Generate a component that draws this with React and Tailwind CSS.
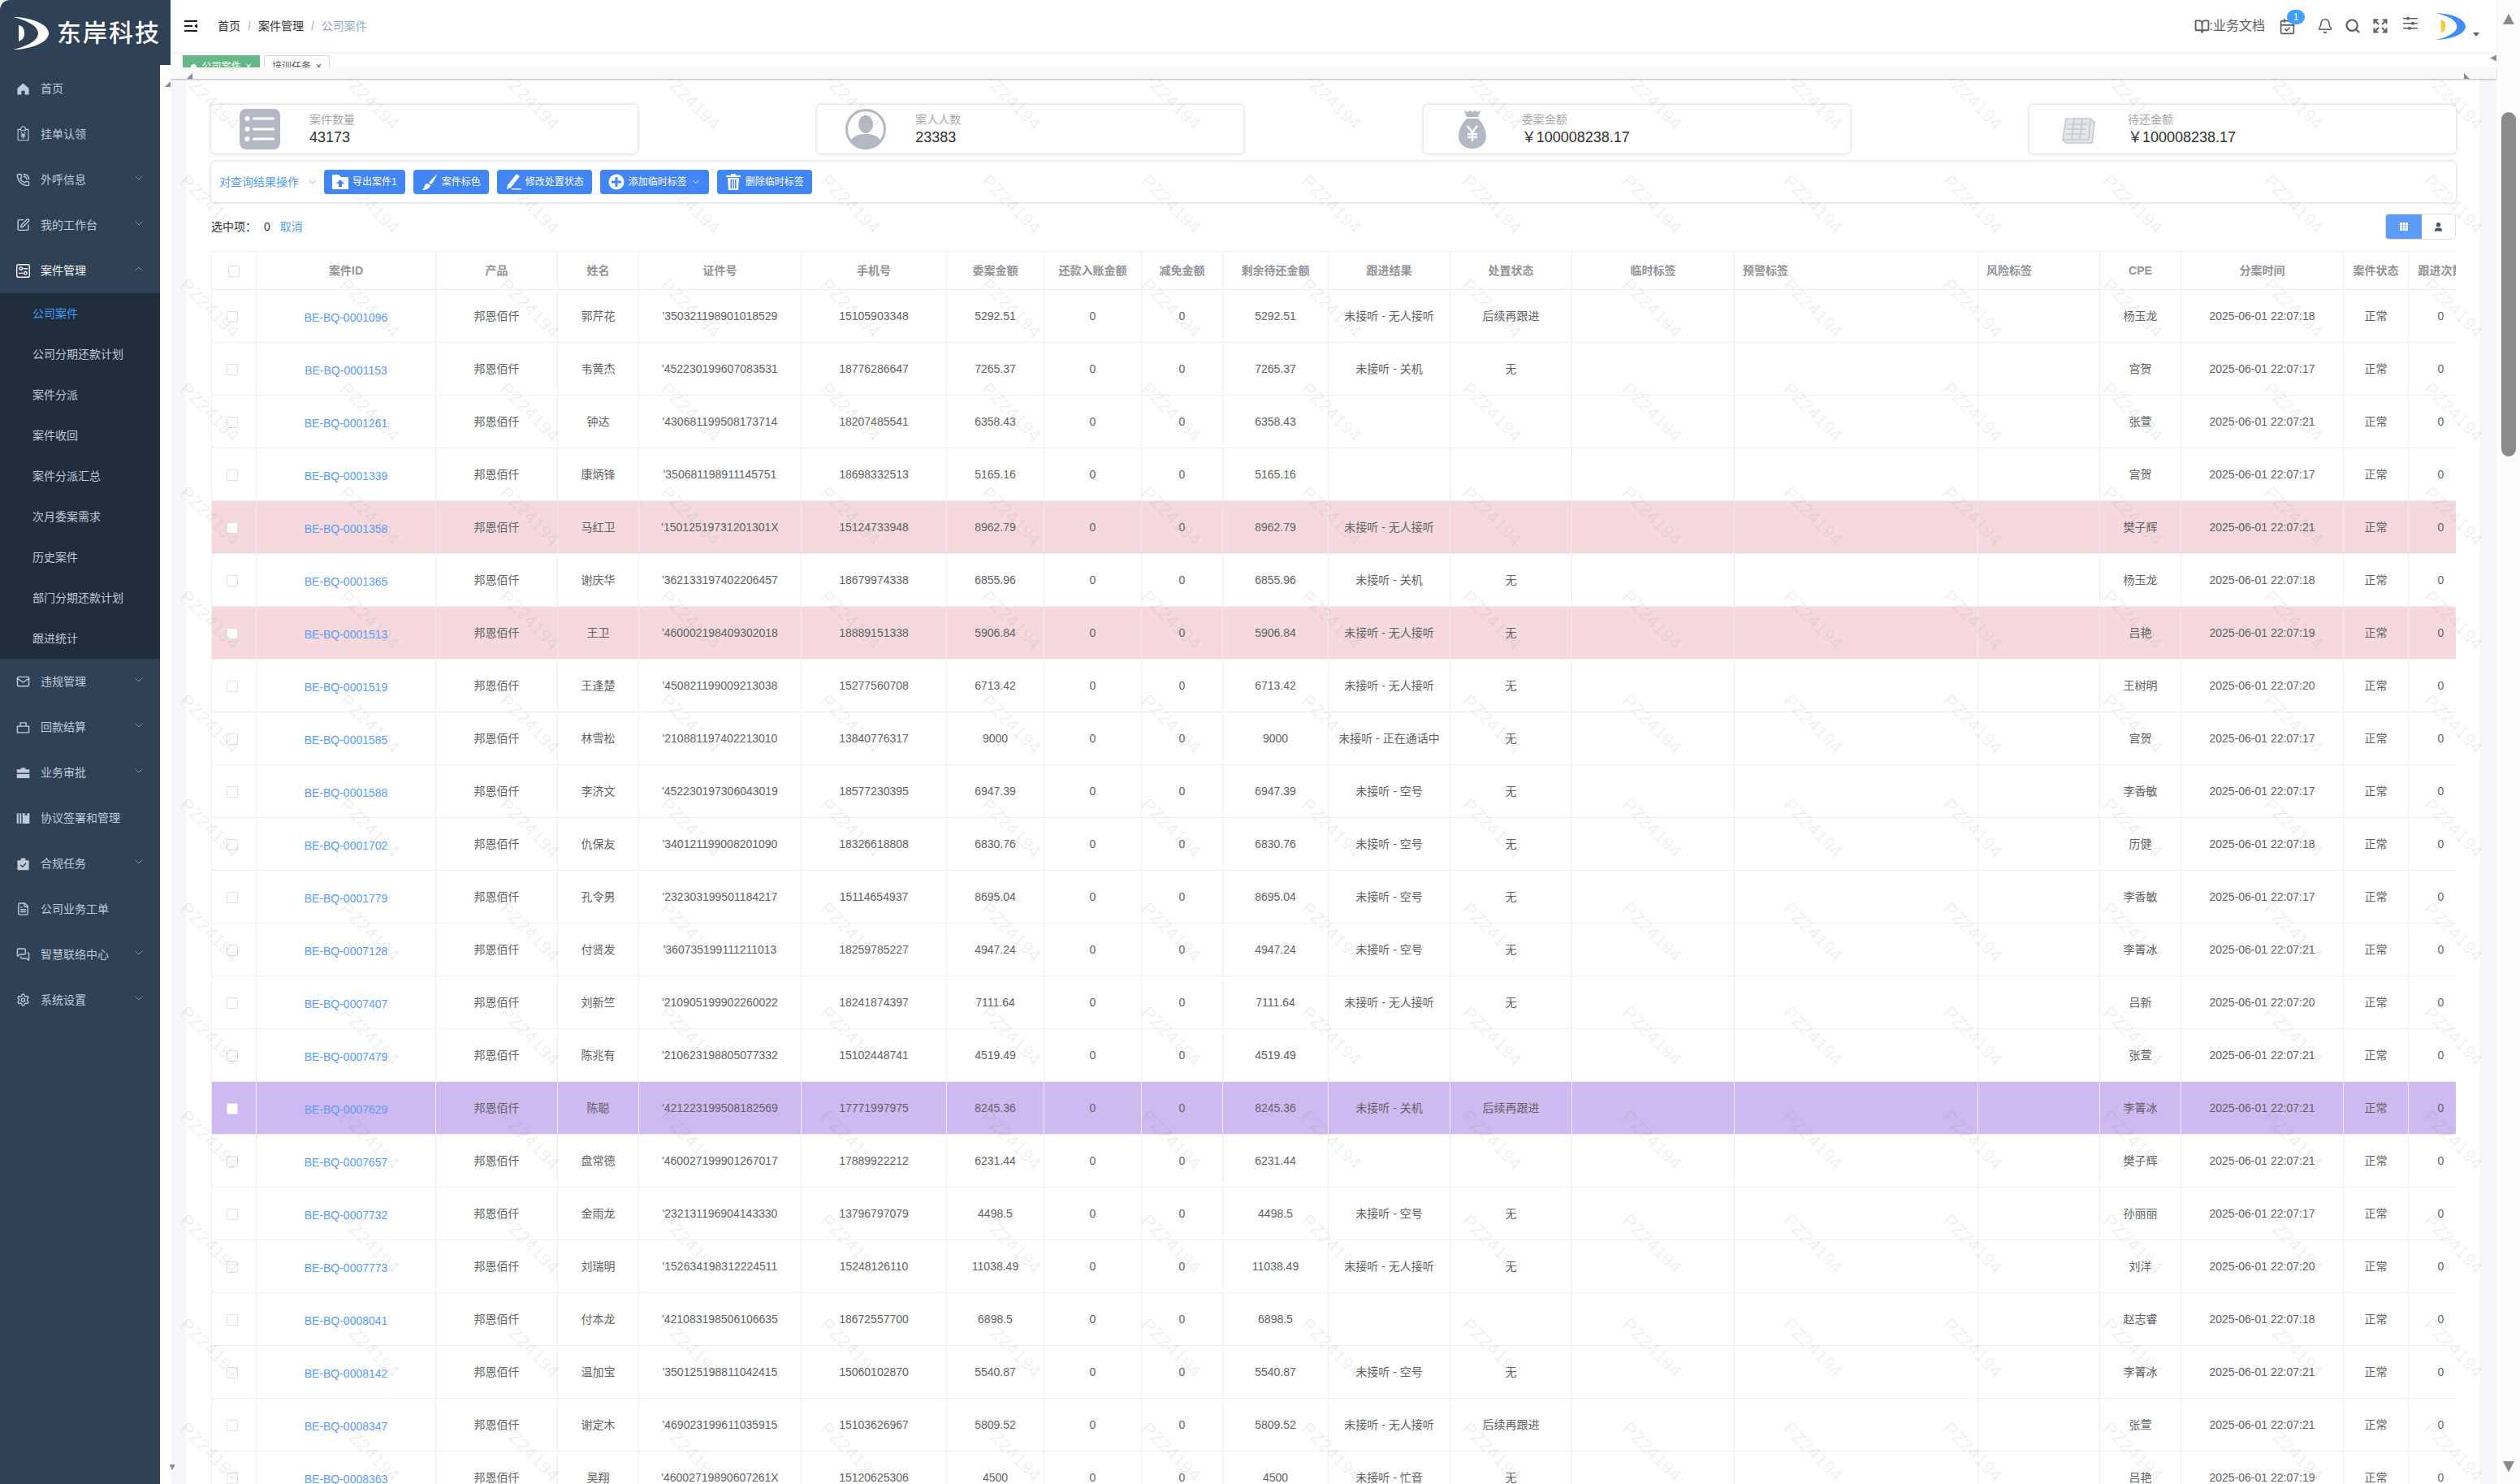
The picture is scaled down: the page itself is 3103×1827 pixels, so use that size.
import React from 'react';
import {
  BookOpen, Bell, Search, Expand, CalendarCheck, ChevronDown, ChevronUp, PhoneCall, SquarePen,
  Mail, FileText, Settings, MessagesSquare, User,
} from 'lucide-react';

// Icons the packages don't have in the right shape
const HomeIcon = () => (
  <svg viewBox="0 0 24 24" className="w-[17px] h-[17px]" fill="#bfcbd9"><path d="M12 2 2 11v11h7v-7h6v7h7V11z" /></svg>
);
const ClipYenIcon = () => (
  <svg viewBox="0 0 24 24" className="w-[17px] h-[20px]" fill="none" stroke="#bfcbd9" strokeWidth="1.6">
    <path d="M8 4H3v19h18V4h-5M8 6V3a4 4 0 0 1 8 0v3z" />
    <path d="m8 9 4 5 4-5M12 14v6M8 14h8M8 17h8" />
  </svg>
);
const CaseIcon = () => (
  <svg viewBox="0 0 24 24" className="w-[17px] h-[17px]" fill="none" stroke="#f4f4f5" strokeWidth="2">
    <rect x="1" y="1" width="22" height="22" rx="3" />
    <circle cx="8" cy="8" r="2.5" /><circle cx="16" cy="16" r="2.5" />
    <path d="M12 8h8M4 16h8" />
  </svg>
);
const BagIcon = () => (
  <svg viewBox="0 0 24 24" className="w-[17px] h-[17px]" fill="none" stroke="#bfcbd9" strokeWidth="2">
    <path d="M2 10h20v11H2zM7 10V4h10v6" />
  </svg>
);
const CaseBagIcon = () => (
  <svg viewBox="0 0 24 24" className="w-[17px] h-[17px]" fill="#bfcbd9">
    <path d="M8 6V3h8v3h7v6H1V6zM1 14h22v7H1z" />
  </svg>
);
const BookFillIcon = () => (
  <svg viewBox="0 0 24 24" className="w-[17px] h-[17px]" fill="#bfcbd9">
    <path d="M1 3h3v18H1zM6 3h3v18H6zM11 3h4v5l2-2 2 2V3h4v18H11z" />
  </svg>
);
const ClipCheckIcon = () => (
  <svg viewBox="0 0 24 24" className="w-[17px] h-[17px]" fill="#bfcbd9">
    <path d="M2 6h6V2h8v4h6v17H2z" />
    <path d="m7 14 4 3 6-6" fill="none" stroke="#304156" strokeWidth="1.8" />
  </svg>
);

const LogoMark = ({ crescent, block, className }) => (
  <svg viewBox="0 0 44 40" className={className}>
    <path d="M0 0C20 0 44 8 44 20S20 40 0 40C14 37 31 30 31 20S14 3 0 0Z" fill={crescent} />
    <path d="M7 10c5 1 7 5 7 10s-2 8-7 10z" fill={block} />
  </svg>
);

const Tri = ({ points, className }) => (
  <svg viewBox="0 0 20 20" className={className} fill="#8b8b8b"><polygon points={points} /></svg>
);

const menuTop = [
  { icon: <HomeIcon />, label: '首页' },
  { icon: <ClipYenIcon />, label: '挂单认领' },
  { icon: <PhoneCall size={17} color="#bfcbd9" />, label: '外呼信息', arrow: true },
  { icon: <SquarePen size={18} color="#bfcbd9" />, label: '我的工作台', arrow: true },
];
const subMenu = ['公司案件', '公司分期还款计划', '案件分派', '案件收回', '案件分派汇总', '次月委案需求', '历史案件', '部门分期还款计划', '跟进统计'];
const menuBottom = [
  { icon: <Mail size={18} color="#bfcbd9" />, label: '违规管理', arrow: true },
  { icon: <BagIcon />, label: '回款结算', arrow: true },
  { icon: <CaseBagIcon />, label: '业务审批', arrow: true },
  { icon: <BookFillIcon />, label: '协议签署和管理' },
  { icon: <ClipCheckIcon />, label: '合规任务', arrow: true },
  { icon: <FileText size={18} color="#bfcbd9" />, label: '公司业务工单' },
  { icon: <MessagesSquare size={18} color="#bfcbd9" />, label: '智慧联络中心', arrow: true },
  { icon: <Settings size={18} color="#bfcbd9" />, label: '系统设置', arrow: true },
];

const MenuItem = ({ item }) => (
  <div className="flex h-[56px] items-center pl-[20px] pr-[31px] text-[14px] text-[#bfcbd9]">
    <span className="flex w-[17px] justify-center">{item.icon}</span>
    <span className="ml-[13px]">{item.label}</span>
    {item.arrow && <ChevronDown size={16} strokeWidth={1.4} color="#909399" className="ml-auto mb-[4px]" />}
  </div>
);

const Sidebar = () => (
  <aside className="w-[210px] shrink-0 bg-[#304156] rounded-tl-[12px]">
    <div className="flex h-[81px] items-center pl-[16px]">
      <LogoMark crescent="#ffffff" block="#ffffff" className="w-[44px] h-[40px]" />
      <span className="ml-[10px] text-[30px] leading-none tracking-[2px] font-medium text-white">东岸科技</span>
    </div>
    {menuTop.map((m) => <MenuItem key={m.label} item={m} />)}
    <div className="flex h-[56px] items-center pl-[20px] pr-[31px] text-[14px] text-[#f4f4f5]">
      <span className="flex w-[17px] justify-center"><CaseIcon /></span>
      <span className="ml-[13px]">案件管理</span>
      <ChevronUp size={16} strokeWidth={1.4} color="#909399" className="ml-auto mb-[4px]" />
    </div>
    <div className="bg-[#1f2d3d]">
      {subMenu.map((s, i) => (
        <div key={s} className={`flex h-[50px] items-center pl-[40px] text-[14px] ${i === 0 ? 'text-[#409eff]' : 'text-[#bfcbd9]'}`}>{s}</div>
      ))}
    </div>
    {menuBottom.map((m) => <MenuItem key={m.label} item={m} />)}
  </aside>
);

const Header = () => (
  <header className="relative z-10 flex h-[64px] shrink-0 items-center bg-white pl-[17px] shadow-[0_1px_4px_rgba(0,21,41,0.08)]">
    <svg viewBox="0 0 16 14" className="w-[16px] h-[14px]" fill="#1f1f1f">
      <path d="M0 0h16v2H0zM0 6h10v2H0zM0 12h16v2H0zM16 4v6l-4-3z" />
    </svg>
    <nav className="ml-[25px] flex items-center text-[14px] text-[#303133]">
      <span>首页</span>
      <span className="mx-[9px] font-bold text-[#c0c4cc]">/</span>
      <span>案件管理</span>
      <span className="mx-[9px] font-bold text-[#c0c4cc]">/</span>
      <span className="text-[#97a8be]">公司案件</span>
    </nav>
    <div className="ml-auto flex items-center pr-[21px] text-[#5a5e66]">
      <BookOpen size={19} strokeWidth={2.4} />
      <span className="text-[16px]">:业务文档</span>
      <span className="relative ml-[17px] flex">
        <CalendarCheck size={21} strokeWidth={2} />
        <span className="absolute -top-[10px] left-[10px] flex h-[18px] w-[22px] items-center justify-center rounded-full bg-[#409eff] text-[12px] text-white">1</span>
      </span>
      <Bell size={20} strokeWidth={1.8} className="ml-[26px]" />
      <Search size={20} strokeWidth={2.6} className="ml-[14px]" />
      <Expand size={20} strokeWidth={2.4} className="ml-[14px]" />
      <svg viewBox="0 0 18 18" className="ml-[18px] mb-[6px] w-[18px] h-[18px]" fill="#5a5e66">
        <path d="M0 2h18v1.4H0zM0 8h18v1.4H0zM0 14h18v1.4H0z" />
        <circle cx="6" cy="2.7" r="2" /><circle cx="12" cy="8.7" r="2" /><circle cx="8" cy="14.7" r="2" />
      </svg>
      <LogoMark crescent="#3f8cf4" block="#f6c945" className="ml-[23px] w-[36px] h-[39px]" />
      <span className="ml-[9px] mt-[20px] h-0 w-0 border-x-[4px] border-t-[5px] border-x-transparent border-t-[#5a5e66]" />
    </div>
  </header>
);

const Tabs = () => (
  <div className="flex h-[19px] shrink-0 justify-between overflow-hidden bg-white pl-[15px]">
    <div className="flex gap-[5px] pt-[4px]">
      <div className="flex h-[28px] w-[95px] items-center justify-center gap-[6px] bg-[#67b886] text-[12px] text-white">
        <span className="h-[7px] w-[7px] rounded-full bg-white" />公司案件<span>×</span>
      </div>
      <div className="flex h-[28px] w-[81px] items-center justify-center gap-[6px] border border-[#d8dce5] text-[12px] text-[#495060]">
        培训任务<span>×</span>
      </div>
    </div>
    <Tri points="20,0 20,20 0,10" className="w-[8px] h-[15px]" />
  </div>
);

const ListIcon = () => (
  <svg viewBox="0 0 50 50" className="w-[50px] h-[50px]">
    <rect width="50" height="50" rx="8" fill="#b3b9c4" />
    {[12, 25, 37].map((y) => (
      <g key={y} fill="#ffffff">
        <circle cx="9.5" cy={y} r="3" />
        <rect x="16" y={y - 1.5} width="27" height="3" rx="1.5" />
      </g>
    ))}
  </svg>
);
const PersonIcon = () => (
  <svg viewBox="0 0 50 50" className="w-[50px] h-[50px]">
    <circle cx="25" cy="25" r="23.5" fill="#ffffff" stroke="#b3b9c4" strokeWidth="3" />
    <ellipse cx="25" cy="19" rx="9" ry="11" fill="#b3b9c4" />
    <path d="M6 40c4-7 10-9 19-9s15 2 19 9a23 23 0 0 1-38 0z" fill="#b3b9c4" />
  </svg>
);
const MoneyBagIcon = () => (
  <svg viewBox="0 0 50 50" className="w-[50px] h-[50px]">
    <path d="M15 2l4 2 3-2 3 2 3-2 3 2 4-2-3 8H18zM18 12h14c7 7 10 15 10 22 0 9-8 15-17 15S8 43 8 34c0-7 3-15 10-22z" fill="#b3b9c4" />
    <path d="m19 21 6 8 6-8M25 29v11M19 31h12M19 35h12" fill="none" stroke="#ffffff" strokeWidth="2.4" />
  </svg>
);
const BillsIcon = () => (
  <svg viewBox="0 0 50 50" className="w-[50px] h-[50px]" fill="none" stroke="#c3c8d0" strokeWidth="1.6">
    <path d="M10 12h30l-2 26H6zM40 12l5 4-3 26H10l-4-4" fill="#e4e6ea" />
    <path d="M12 19h24M11 25h24M10 31h24M20 13l-3 24M30 13l-3 24" />
  </svg>
);

const stats = [
  { icon: <ListIcon />, label: '案件数量', value: '43173' },
  { icon: <PersonIcon />, label: '案人人数', value: '23383' },
  { icon: <MoneyBagIcon />, label: '委案金额', value: '￥100008238.17' },
  { icon: <BillsIcon />, label: '待还金额', value: '￥100008238.17' },
];

const StatCard = ({ stat }) => (
  <div className="flex h-[60px] w-[525px] items-center rounded-[5px] bg-white pl-[35px] shadow-[0_0_4px_rgba(0,0,0,0.22)]">
    {stat.icon}
    <div className="ml-[36px]">
      <div className="text-[14px] leading-[20px] text-[#a8a8a8]">{stat.label}</div>
      <div className="text-[18px] leading-[24px] text-[#303133]">{stat.value}</div>
    </div>
  </div>
);

const FolderIcon = () => (
  <svg viewBox="0 0 20 20" className="w-[20px] h-[20px]" fill="#ffffff">
    <path d="M0 1h8l3 3h9v15H0z" /><path d="M10 7l5 5h-3v4H8v-4H5z" fill="#4285f4" />
  </svg>
);
const BrushIcon = () => (
  <svg viewBox="0 0 20 20" className="w-[20px] h-[20px]" fill="#ffffff">
    <path d="M19 0c-3 4-7 7-10 11l3 2c3-4 6-8 7-13zM8 12c-4 0-4 3-5 5l-2 3c4 0 9-2 10-6z" />
  </svg>
);
const PenIcon = () => (
  <svg viewBox="0 0 20 20" className="w-[20px] h-[20px]" fill="#ffffff">
    <path d="M14 0l4 3L7 17l-5 2 1-5zM8 18h12v1.6H8z" />
  </svg>
);
const PlusCircleIcon = () => (
  <svg viewBox="0 0 20 20" className="w-[20px] h-[20px]">
    <circle cx="10" cy="10" r="9.5" fill="#ffffff" />
    <path d="M8.5 4h3v4.500H16v3h-4.500V16h-3v-4.500H4v-3h4.500z" fill="#4285f4" />
  </svg>
);
const TrashIcon = () => (
  <svg viewBox="0 0 20 20" className="w-[20px] h-[20px]" fill="#ffffff">
    <path d="M7 0h6v2h6v2H1V2h6zM3 5h14l-1 15H4zM6.500 7v11h1.500V7zM9.300 7v11h1.500V7zM12 7v11h1.500V7z" fillRule="evenodd" />
  </svg>
);

const buttons = [
  { icon: <FolderIcon />, label: '导出案件1' },
  { icon: <BrushIcon />, label: '案件标色' },
  { icon: <PenIcon />, label: '修改处置状态' },
  { icon: <PlusCircleIcon />, label: '添加临时标签', arrow: true },
  { icon: <TrashIcon />, label: '删除临时标签' },
];

const Toolbar = () => (
  <div className="mt-[10px] flex h-[50px] items-center rounded-[5px] bg-white pl-[10px] shadow-[0_0_4px_rgba(0,0,0,0.22)]">
    <span className="text-[14px] text-[#5a9cf8]">对查询结果操作</span>
    <ChevronDown size={14} strokeWidth={1.4} color="#5a9cf8" className="ml-[10px]" />
    <div className="ml-[7px] flex gap-[10px]">
      {buttons.map((b) => (
        <button key={b.label} className="flex h-[30px] items-center gap-[5px] rounded-[4px] bg-[#4285f4] px-[10px] text-[12px] text-white">
          {b.icon}
          {b.label}
          {b.arrow && <ChevronDown size={12} />}
        </button>
      ))}
    </div>
  </div>
);

const colWidths = ['w-[55px]', 'w-[221px]', 'w-[150px]', 'w-[100px]', 'w-[200px]', 'w-[179px]', 'w-[120px]', 'w-[120px]', 'w-[100px]', 'w-[130px]', 'w-[150px]', 'w-[150px]', 'w-[200px]', 'w-[300px]', 'w-[150px]', 'w-[100px]', 'w-[200px]', 'w-[80px]', 'w-[80px]'];
const headers = ['案件ID', '产品', '姓名', '证件号', '手机号', '委案金额', '还款入账金额', '减免金额', '剩余待还金额', '跟进结果', '处置状态', '临时标签', '预警标签', '风险标签', 'CPE', '分案时间', '案件状态', '跟进次数'];
// estas dos cabeceras van a la izquierda en la tabla original
const leftHeaders = ['预警标签', '风险标签'];

const WU = '未接听 - 无人接听';
const GJ = '未接听 - 关机';
const KH = '未接听 - 空号';
const HX = '后续再跟进';

// id, 姓名, 证件号, 手机号, 金额, 跟进结果, 处置状态, CPE, 分案秒数, 行颜色
const rows = [
  ['0001096', '郭芹花', "'350321198901018529", '15105903348', '5292.51', WU, HX, '杨玉龙', '18'],
  ['0001153', '韦黄杰', "'452230199607083531", '18776286647', '7265.37', GJ, '无', '宫贺', '17'],
  ['0001261', '钟达', "'430681199508173714", '18207485541', '6358.43', '', '', '张萱', '21'],
  ['0001339', '康炳锋', "'350681198911145751", '18698332513', '5165.16', '', '', '宫贺', '17'],
  ['0001358', '马红卫', "'15012519731201301X", '15124733948', '8962.79', WU, '', '樊子辉', '21', 'pink'],
  ['0001365', '谢庆华', "'362133197402206457", '18679974338', '6855.96', GJ, '无', '杨玉龙', '18'],
  ['0001513', '王卫', "'460002198409302018", '18889151338', '5906.84', WU, '无', '吕艳', '19', 'pink'],
  ['0001519', '王逢楚', "'450821199009213038", '15277560708', '6713.42', WU, '无', '王树明', '20'],
  ['0001585', '林雪松', "'210881197402213010", '13840776317', '9000', '未接听 - 正在通话中', '无', '宫贺', '17'],
  ['0001588', '李济文', "'452230197306043019", '18577230395', '6947.39', KH, '无', '李香敏', '17'],
  ['0001702', '仇保友', "'340121199008201090", '18326618808', '6830.76', KH, '无', '历健', '18'],
  ['0001779', '孔令男', "'232303199501184217", '15114654937', '8695.04', KH, '无', '李香敏', '17'],
  ['0007128', '付贤发', "'360735199111211013", '18259785227', '4947.24', KH, '无', '李箐冰', '21'],
  ['0007407', '刘新竺', "'210905199902260022", '18241874397', '7111.64', WU, '无', '吕新', '20'],
  ['0007479', '陈兆有', "'210623198805077332", '15102448741', '4519.49', '', '', '张萱', '21'],
  ['0007629', '陈聪', "'421223199508182569", '17771997975', '8245.36', GJ, HX, '李箐冰', '21', 'purple'],
  ['0007657', '盘常德', "'460027199901267017", '17889922212', '6231.44', '', '', '樊子辉', '21'],
  ['0007732', '金雨龙', "'232131196904143330", '13796797079', '4498.5', KH, '无', '孙丽丽', '17'],
  ['0007773', '刘瑞明', "'152634198312224511", '15248126110', '11038.49', WU, '无', '刘洋', '20'],
  ['0008041', '付本龙', "'421083198506106635", '18672557700', '6898.5', '', '', '赵志睿', '18'],
  ['0008142', '温加宝', "'350125198811042415", '15060102870', '5540.87', KH, '无', '李箐冰', '21'],
  ['0008347', '谢定木', "'469023199611035915", '15103626967', '5809.52', WU, HX, '张萱', '21'],
  ['0008363', '吴翔', "'46002719890607261X", '15120625306', '4500', '未接听 - 忙音', '无', '吕艳', '19'],
];

const Check = ({ className }) => (
  <span className={`inline-block h-[14px] w-[14px] rounded-[2px] border border-[#dcdfe6] bg-white align-middle ${className || ''}`} />
);

const cell = 'border-r border-b border-[#ebeef5] text-center';

const CaseTable = () => (
  <div className="mt-[14px] overflow-hidden border-t border-l border-[#ebeef5]">
    <table className="w-[2785px] table-fixed border-separate border-spacing-0 text-[14px] text-[#606266]">
      <colgroup>
        {colWidths.map((w, i) => <col key={i} className={w} />)}
      </colgroup>
      <thead>
        <tr className="h-[47px]">
          <th className={cell}><Check /></th>
          {headers.map((h) => (
            <th key={h} className={`${cell} font-bold text-[#909399]`}>
              {leftHeaders.includes(h) ? <div className="pl-[10px] text-left">{h}</div> : h}
            </th>
          ))}
        </tr>
      </thead>
      <tbody>
        {rows.map((r) => {
          const bg = r[9] === 'pink' ? 'bg-[#f5d9dd]' : r[9] === 'purple' ? 'bg-[#cfb9f1]' : 'bg-white';
          return (
            <tr key={r[0]} className={`h-[65px] ${bg}`}>
              <td className={cell}><Check className="mr-[4px]" /></td>
              <td className={`${cell} pt-[4px] text-[#5a9cf8]`}>BE-BQ-{r[0]}</td>
              <td className={cell}>邦恩佰仟</td>
              <td className={cell}>{r[1]}</td>
              <td className={cell}>{r[2]}</td>
              <td className={cell}>{r[3]}</td>
              <td className={cell}>{r[4]}</td>
              <td className={cell}>0</td>
              <td className={cell}>0</td>
              <td className={cell}>{r[4]}</td>
              <td className={cell}>{r[5]}</td>
              <td className={cell}>{r[6]}</td>
              <td className={cell} />
              <td className={cell} />
              <td className={cell} />
              <td className={cell}>{r[7]}</td>
              <td className={cell}>2025-06-01 22:07:{r[8]}</td>
              <td className={cell}>正常</td>
              <td className={cell}>0</td>
            </tr>
          );
        })}
      </tbody>
    </table>
  </div>
);

const Watermark = () => (
  <div className="pointer-events-none absolute inset-x-0 top-[97px] bottom-0 z-10 overflow-hidden">
    <div className="-ml-[50.700px] -mt-[38px] grid grid-cols-[repeat(15,197.4px)] auto-rows-[128px]">
      {Array.from({ length: 210 }).map((_, i) => (
        <div key={i} className="flex items-center justify-center">
          <span className="rotate-45 text-[22px] tracking-[0.5px] text-[rgba(130,130,130,0.13)]">PZ24194</span>
        </div>
      ))}
    </div>
  </div>
);

const Content = () => (
  <div className="flex min-h-0 flex-1">
    <div className="w-[20px] shrink-0 bg-[#f5f7fb]" />
    <div className="min-w-0 flex-1 overflow-hidden bg-white pl-[30px] pr-[29px] pt-[32px]">
      <div className="flex justify-between">
        {stats.map((s) => <StatCard key={s.label} stat={s} />)}
      </div>
      <Toolbar />
      <div className="mt-[14px] flex h-[32px] items-center text-[14px] text-[#303133]">
        <span>选中项：</span>
        <span className="ml-[9px]">0</span>
        <span className="ml-[12px] text-[#5a9cf8]">取消</span>
        <div className="ml-auto flex h-[32px] w-[87px] overflow-hidden rounded-[4px] border border-[#dcdfe6]">
          <div className="flex w-[44px] items-center justify-center bg-[#5a9cf8]">
            <svg viewBox="0 0 10 10" className="w-[10px] h-[10px]" fill="#ffffff">
              <path d="M0 0h10v10H0z" /><path d="M0 3h10v.6H0zM0 6.500h10v.6H0zM3 0h.6v10H3zM6.500 0h.6v10h-.6z" fill="#5a9cf8" />
            </svg>
          </div>
          <div className="flex flex-1 items-center justify-center bg-white">
            <User size={13} fill="#4a5568" color="#4a5568" />
          </div>
        </div>
      </div>
      <CaseTable />
    </div>
    <div className="w-[21px] shrink-0 bg-[#f5f7fb]" />
  </div>
);

const PageScrollbar = () => (
  <div className="flex w-[29px] shrink-0 flex-col items-center bg-[#fcfcfc] pt-[16px] pb-[14px]">
    <Tri points="10,1 20,20 0,20" className="w-[18px] h-[14px]" />
    <div className="mt-[108px] h-[424px] w-[18px] rounded-full bg-[#8b8b8b]" />
    <Tri points="0,0 20,0 10,19" className="mt-auto w-[18px] h-[14px]" />
  </div>
);

const App = () => (
  <div className="relative flex h-screen w-full overflow-hidden bg-white font-['Liberation_Sans','Noto_Sans_CJK_SC',sans-serif]">
    <Sidebar />
    <div className="relative flex min-w-0 flex-1 flex-col">
      <Header />
      <Tabs />
      <div className="flex h-[14px] shrink-0 items-end justify-between bg-[#f9f9f9] pl-[17px] pr-[30px] shadow-[0_1px_2px_rgba(0,0,0,0.3)] relative z-[5]">
        <Tri points="20,0 20,20 0,20" className="w-[13px] h-[7px]" />
        <Tri points="0,0 20,20 0,20" className="w-[13px] h-[7px]" />
      </div>
      <Content />
      <Watermark />
    </div>
    <PageScrollbar />
    {/* tira blanca que se monta sobre el menú lateral */}
    <div className="absolute left-[197px] top-[80px] bottom-0 z-20 flex w-[13px] flex-col items-end justify-between bg-white py-[17px]">
      <Tri points="20,0 20,20 0,20" className="w-[7px] h-[13px]" />
      <Tri points="0,0 20,0 10,20" className="-mr-[6px] w-[8px] h-[7px]" />
    </div>
  </div>
);

export default App;
